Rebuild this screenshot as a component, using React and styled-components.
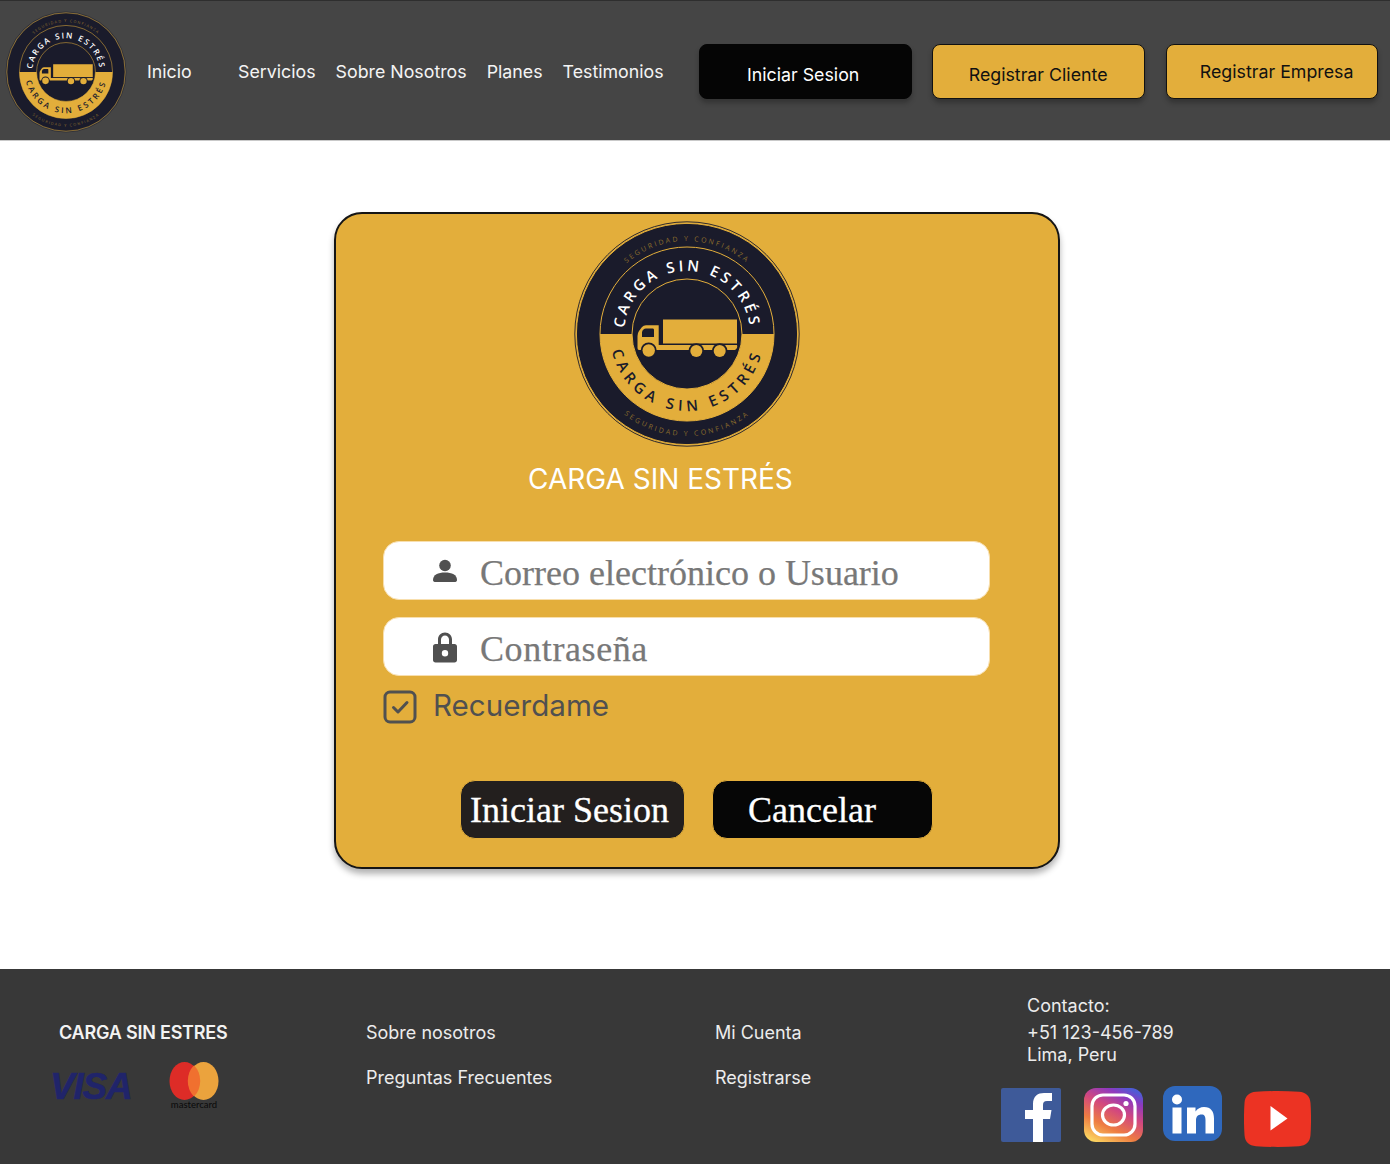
import React from "react";
import styled, { createGlobalStyle } from "styled-components";

const Global = createGlobalStyle`
  html, body { margin: 0; padding: 0; background: #fff; }
  body { font-family: Inter, "Liberation Sans", sans-serif; }
  * { box-sizing: border-box; }
`;

const GOLD = "#E3AE3B";
const NAVY = "#1A1B2B";
const SERIF = `"Liberation Serif", "DejaVu Serif", serif`;

const Page = styled.div`
  width: 1390px;
  height: 1164px;
  display: flex;
  flex-direction: column;
  overflow: hidden;
`;

const Header = styled.header`
  height: 141px;
  flex: none;
  background: #454545;
  border-top: 1px solid #2e2e2e;
  border-bottom: 1px solid #c9c9c9;
  display: flex;
  align-items: center;
  padding: 2px 12px 0 5px;
`;

const Brand = styled.div`
  width: 122px;
  height: 122px;
  flex: none;
  margin-right: 20px;
`;

const Nav = styled.nav`
  display: flex;
  gap: 20px;
  margin-right: 35px;
`;

const NavLink = styled.a`
  color: #f4f4f4;
  font-size: 17.8px;
  line-height: 22px;
  width: ${(p) => (p.$w ? `${p.$w}px` : "auto")};
  white-space: nowrap;
`;

const Actions = styled.div`
  display: flex;
  gap: 20px;
  padding-bottom: 1px;
`;

const HeadButton = styled.button`
  width: ${(p) => p.$w || 213}px;
  height: 55px;
  margin-left: ${(p) => p.$ml || 0}px;
  border-radius: 8px;
  border: 1.5px solid ${(p) => (p.$dark ? "#050505" : "#111")};
  background: ${(p) => (p.$dark ? "#050505" : GOLD)};
  color: ${(p) => (p.$dark ? "#fff" : "#111")};
  font: 17.8px/22px Inter, "Liberation Sans", sans-serif;
  box-shadow: 0 4px 5px rgba(0, 0, 0, 0.25);
  padding: ${(p) => p.$pad || "8px 0 0"};
`;

const Main = styled.main`
  flex: 1;
  display: flex;
  justify-content: flex-start;
  padding: 71px 0 0 334px;
  background: #fff;
`;

const Card = styled.section`
  width: 726px;
  height: 657px;
  background: ${GOLD};
  border: 2px solid #151515;
  border-radius: 28px;
  box-shadow: 0 5px 6px rgba(0, 0, 0, 0.3);
  padding: 6px 68px 0 47px;
  display: flex;
  flex-direction: column;
  align-items: flex-start;
`;

const CardLogo = styled.div`
  width: 228px;
  height: 228px;
  margin-left: 190px;
`;

const CardTitle = styled.h1`
  margin: 14px 0 0 145px;
  color: #fff;
  font-size: 28px;
  line-height: 34px;
  font-weight: 400;
  white-space: nowrap;
`;

const Field = styled.label`
  width: 607px;
  height: 59px;
  margin-top: ${(p) => p.$mt}px;
  background: #fff;
  border: 1px solid #f8dfae;
  border-radius: 16px;
  display: flex;
  align-items: center;
  padding-left: 48px;
  gap: 22px;
`;

const FieldIcon = styled.svg`
  width: 26px;
  height: 32px;
  flex: none;
  fill: #505050;
`;

const FieldInput = styled.input`
  flex: 1;
  min-width: 0;
  height: 100%;
  border: 0;
  background: none;
  outline: none;
  padding: 4px 0 0;
  font-family: ${SERIF};
  font-size: 36px;
  letter-spacing: ${(p) => p.$ls || 0}px;
  color: #787878;
  -webkit-text-stroke: 0.25px #787878;
  &::placeholder { color: #787878; opacity: 1; }
`;

const Remember = styled.div`
  display: flex;
  align-items: flex-start;
  gap: 16px;
  margin-top: 14px;
  color: #505050;
  font-size: 29.6px;
  line-height: 32px;
`;

const RememberText = styled.span`
  margin-top: -1px;
`;

const Check = styled.svg`
  width: 34px;
  height: 34px;
  flex: none;
`;

const CardActions = styled.div`
  display: flex;
  gap: 27px;
  margin: 56px 0 0 77px;
`;

const CardButton = styled.button`
  height: 59px;
  width: ${(p) => p.$w}px;
  border: 1px solid ${GOLD};
  border-radius: 15px;
  background: ${(p) => p.$bg};
  color: #fff;
  font-family: ${SERIF};
  font-size: 36px;
  -webkit-text-stroke: 0.3px #fff;
  text-align: left;
  padding: 0 0 0 ${(p) => p.$pl}px;
  white-space: nowrap;
`;

const Footer = styled.footer`
  height: 195px;
  flex: none;
  background: #383838;
  color: #ececec;
  display: grid;
  grid-template-columns: 366px 349px 312px 1fr;
  font-size: 18px;
  line-height: 22px;
`;

const FooterCol = styled.div`
  display: flex;
  flex-direction: column;
  padding-top: 53px;
  gap: 23px;
`;

const BrandCol = styled.div`
  display: flex;
  flex-direction: column;
  padding: 53px 0 0 50px;
`;

const FooterBrand = styled.div`
  color: #f3f3f3;
  font-weight: 600;
  letter-spacing: -0.22px;
  margin-left: 9px;
`;

const Payments = styled.div`
  display: flex;
  align-items: flex-start;
  gap: 42px;
  margin-top: 18px;
`;

const Visa = styled.span`
  font: italic 700 37px/36px "Liberation Sans", sans-serif;
  color: #20246a;
  -webkit-text-stroke: 0.6px #20246a;
  letter-spacing: -1.2px;
  width: 77px;
  margin-top: 7px;
`;

const Master = styled.div`
  width: 50px;
  display: flex;
  flex-direction: column;
  align-items: center;
`;

const MasterText = styled.span`
  color: #0c0c0c;
  font: 500 9.5px/10px Lato, "Liberation Sans", sans-serif;
  white-space: nowrap;
`;

const ContactCol = styled.div`
  display: flex;
  flex-direction: column;
  padding-top: 26px;
`;

const ContactLine = styled.div`
  margin-bottom: ${(p) => p.$mb || 0}px;
`;

const Socials = styled.div`
  display: flex;
  align-items: flex-start;
  margin: 20px 0 0 -26px;
`;

const Social = styled.svg`
  width: ${(p) => p.$w}px;
  height: ${(p) => p.$h}px;
  flex: none;
  margin-left: ${(p) => p.$ml || 0}px;
  margin-top: ${(p) => p.$mt || 0}px;
`;

function Logo({ id }) {
  const C = 114;
  const arcTop = (r) => `M ${C - r} ${C} A ${r} ${r} 0 0 1 ${C + r} ${C}`;
  const arcBot = (r) => `M ${C - r} ${C} A ${r} ${r} 0 0 0 ${C + r} ${C}`;
  return (
    <svg viewBox="0 0 228 228" width="100%" height="100%" style={{ display: "block" }}>
      <defs>
        <path id={`${id}a`} d={arcTop(63)} />
        <path id={`${id}b`} d={arcBot(77)} />
        <path id={`${id}c`} d={arcTop(93)} />
        <path id={`${id}d`} d={arcBot(102)} />
      </defs>
      <circle cx={C} cy={C} r={112.2} fill="none" stroke="#1A1B2B" strokeWidth="0.9" />
      <circle cx={C} cy={C} r={110.6} fill={NAVY} stroke={GOLD} strokeWidth="1" />
      <path d={`M ${C - 87} ${C} A 87 87 0 0 0 ${C + 87} ${C} Z`} fill={GOLD} />
      <circle cx={C} cy={C} r={87} fill="none" stroke={GOLD} strokeWidth="1" />
      <circle cx={C} cy={C} r={55} fill={NAVY} stroke={GOLD} strokeWidth="1" />
      <rect x={90} y={99.5} width={74} height={24} fill={GOLD} />
      <path
        d="M66 130 Q64.5 130 64.5 128 L64.5 116 Q64.5 113 66 111 L69 107 Q70.5 105.3 73 105.3 L85.7 105.3 L85.7 125 L164 125 Q165 128 162 130 Z"
        fill={GOLD}
      />
      <path d="M69 117 L69 112 Q70 108.5 73 108.5 L80 108.5 Q81 108.5 81 110 L81 117 Z" fill={NAVY} />
      {[[75.7, 130.5, 8], [123.3, 131, 7.8], [146.7, 131, 7.8]].map(([x, y, r]) => (
        <g key={x}>
          <circle cx={x} cy={y} r={r} fill={NAVY} />
          <circle cx={x} cy={y} r={r - 1.8} fill={GOLD} />
        </g>
      ))}
      <path d="M132 125 L138 125 L135 129 Z" fill={GOLD} />
      <g fontFamily={`"Open Sans", Lato, sans-serif`} textAnchor="middle">
        <text fill="#fff" fontSize="15" fontWeight="600" letterSpacing="3.3">
          <textPath href={`#${id}a`} startOffset="50%">CARGA SIN ESTRÉS</textPath>
        </text>
        <text fill={NAVY} fontSize="15" fontWeight="600" letterSpacing="4.6">
          <textPath href={`#${id}b`} startOffset="50%">CARGA SIN ESTRÉS</textPath>
        </text>
        <text fill="#8d6d2b" fontSize="7" letterSpacing="2.2">
          <textPath href={`#${id}c`} startOffset="50%">SEGURIDAD Y CONFIANZA</textPath>
        </text>
        <text fill="#8d6d2b" fontSize="7" letterSpacing="2.4">
          <textPath href={`#${id}d`} startOffset="50%">SEGURIDAD Y CONFIANZA</textPath>
        </text>
      </g>
    </svg>
  );
}

export default function App() {
  return (
    <Page>
      <Global />
      <Header>
        <Brand><Logo id="hd" /></Brand>
        <Nav>
          <NavLink $w={71}>Inicio</NavLink>
          <NavLink>Servicios</NavLink>
          <NavLink>Sobre Nosotros</NavLink>
          <NavLink>Planes</NavLink>
          <NavLink>Testimonios</NavLink>
        </Nav>
        <Actions>
          <HeadButton $dark $pad="8px 4px 0 0">Iniciar Sesion</HeadButton>
          <HeadButton>Registrar Cliente</HeadButton>
          <HeadButton $w={212} $ml={1} $pad="2px 0 0 10px">Registrar Empresa</HeadButton>
        </Actions>
      </Header>

      <Main>
        <Card>
          <CardLogo><Logo id="cd" /></CardLogo>
          <CardTitle>CARGA SIN ESTRÉS</CardTitle>
          <Field $mt={45}>
            <FieldIcon viewBox="0 0 26 32">
              <circle cx="13" cy="10.5" r="5.8" />
              <path d="M1 25 C1 20 6 17.6 13 17.6 C20 17.6 25 20 25 25 C25 26.6 24 27 22.5 27 L3.5 27 C2 27 1 26.6 1 25 Z" />
            </FieldIcon>
            <FieldInput placeholder="Correo electrónico o Usuario" readOnly />
          </Field>
          <Field $mt={17}>
            <FieldIcon viewBox="0 0 26 32">
              <path
                fillRule="evenodd"
                d="M6 13 L6 8.5 C6 4.5 9 1.5 13 1.5 C17 1.5 20 4.5 20 8.5 L20 13 L22.5 13 C24 13 25 14 25 15.5 L25 29 C25 30.5 24 31.5 22.5 31.5 L3.5 31.5 C2 31.5 1 30.5 1 29 L1 15.5 C1 14 2 13 3.5 13 Z M9 13 L17 13 L17 8.5 C17 6.2 15.2 4.5 13 4.5 C10.8 4.5 9 6.2 9 8.5 Z M13 19 A3.2 3.2 0 1 0 13 25.4 A3.2 3.2 0 1 0 13 19 Z"
              />
            </FieldIcon>
            <FieldInput placeholder="Contraseña" $ls={0.6} readOnly />
          </Field>
          <Remember>
            <Check viewBox="0 0 34 34" fill="none" stroke="#505050">
              <rect x="2" y="2" width="30" height="30" rx="5" strokeWidth="3" />
              <path d="M10.5 17.5 L15 22 L24 12.5" strokeWidth="3" strokeLinecap="round" strokeLinejoin="round" />
            </Check>
            <RememberText>Recuerdame</RememberText>
          </Remember>
          <CardActions>
            <CardButton $w={225} $bg="#231f1e" $pl={9}>Iniciar Sesion</CardButton>
            <CardButton $w={221} $bg="#060606" $pl={35}>Cancelar</CardButton>
          </CardActions>
        </Card>
      </Main>

      <Footer>
        <BrandCol>
          <FooterBrand>CARGA SIN ESTRES</FooterBrand>
          <Payments>
            <Visa>VISA</Visa>
            <Master>
              <svg width="50" height="38" viewBox="0 0 50 38">
                <ellipse cx="15.5" cy="19" rx="15" ry="19" fill="#DD2C27" />
                <ellipse cx="34.5" cy="19" rx="15" ry="19" fill="#EBA33D" />
                <path d="M25 3.6 A15 19 0 0 1 25 34.4 A15 19 0 0 1 25 3.6 Z" fill="#F0702F" />
              </svg>
              <MasterText>mastercard</MasterText>
            </Master>
          </Payments>
        </BrandCol>
        <FooterCol>
          <span>Sobre nosotros</span>
          <span>Preguntas Frecuentes</span>
        </FooterCol>
        <FooterCol>
          <span>Mi Cuenta</span>
          <span>Registrarse</span>
        </FooterCol>
        <ContactCol>
          <ContactLine $mb={5}>Contacto:</ContactLine>
          <ContactLine>+51 123-456-789</ContactLine>
          <ContactLine>Lima, Peru</ContactLine>
          <Socials>
            <Social $w={60} $h={54} $mt={2} viewBox="0 0 60 54">
              <rect width="60" height="54" rx="2" fill="#3E5A99" />
              <path d="M32 54 L32 31 L24 31 L24 22 L32 22 L32 16 C32 8 37 5 43 5 L51 5 L51 13 L46 13 C43 13 42 14.5 42 17 L42 22 L50.5 22 L49 31 L42 31 L42 54 Z" fill="#fff" />
            </Social>
            <Social $w={59} $h={54} $ml={23} $mt={2} viewBox="0 0 59 54">
              <defs>
                <linearGradient id="ig" x1="0.2" y1="1" x2="0.75" y2="0">
                  <stop offset="0" stopColor="#FBD35F" />
                  <stop offset="0.3" stopColor="#EE7C42" />
                  <stop offset="0.6" stopColor="#D2477F" />
                  <stop offset="0.85" stopColor="#8D39C0" />
                  <stop offset="1" stopColor="#4F5BD5" />
                </linearGradient>
              </defs>
              <rect width="59" height="54" rx="12" fill="url(#ig)" />
              <rect x="8" y="7" width="43" height="40" rx="11" fill="none" stroke="#fff" strokeWidth="3.2" />
              <ellipse cx="29.5" cy="27" rx="11" ry="10" fill="none" stroke="#fff" strokeWidth="3.2" />
              <circle cx="42" cy="15.5" r="2.6" fill="#fff" />
            </Social>
            <Social $w={59} $h={55} $ml={20} viewBox="0 0 59 55">
              <rect width="59" height="55" rx="12" fill="#2F68BD" />
              <circle cx="14" cy="13.5" r="5" fill="#fff" />
              <rect x="9.5" y="21.5" width="9" height="26" fill="#fff" />
              <path d="M24 21.5 L32.5 21.5 L32.5 25.5 C34.5 22.5 37.5 21 41 21 C48 21 51 25.5 51 32.5 L51 47.5 L42.5 47.5 L42.5 34 C42.5 30.5 41.5 28.5 38.5 28.5 C35 28.5 33 30.5 33 34.5 L33 47.5 L24 47.5 Z" fill="#fff" />
            </Social>
            <Social $w={67} $h={56} $ml={22} $mt={5} viewBox="0 0 67 56">
              <path d="M12 0.8 C26 -0.2 41 -0.2 55 0.8 C62 1.3 66 5 66.5 12 C67.2 22 67.2 34 66.5 44 C66 51 62 54.7 55 55.2 C41 56.2 26 56.2 12 55.2 C5 54.7 1 51 0.5 44 C-0.2 34 -0.2 22 0.5 12 C1 5 5 1.3 12 0.8 Z" fill="#EC3323" />
              <path d="M26.5 15 L43.5 27.5 L26.5 39.5 Z" fill="#fff" />
            </Social>
          </Socials>
        </ContactCol>
      </Footer>
    </Page>
  );
}
